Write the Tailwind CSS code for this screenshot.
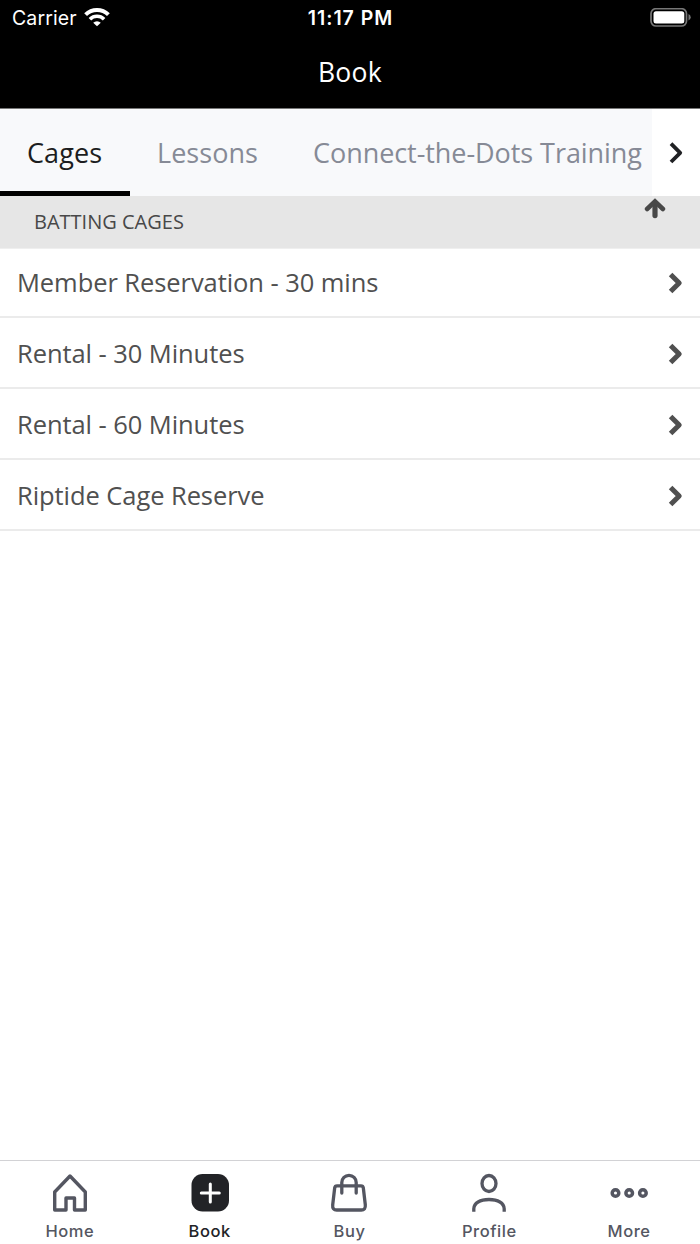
<!DOCTYPE html>
<html lang="en">
<head>
<meta charset="utf-8">
<title>Book</title>
<script src="https://cdn.jsdelivr.net/npm/@tailwindcss/browser@4"></script>
</head>
<body class="bg-white">
<div class="flex h-[1244px] w-[700px] flex-col overflow-hidden bg-white font-['Open_Sans',sans-serif]">
  <header class="h-[109px] shrink-0 border-b border-[#777] bg-black text-white">
    <div class="grid h-9 grid-cols-3 items-center pr-[9px] pl-3 font-['Inter',sans-serif] text-[19px] leading-9">
      <div class="flex items-center gap-[7px]">
        <span class="text-[19.5px] tracking-[0.1px]">Carrier</span>
        <svg class="-mt-0.5" width="26" height="20" viewBox="0 0 26 20" fill="none" stroke="#fff" stroke-width="4"><path d="M1.6 7.600a16.200 16.200 0 0 1 22.800 0"/><path d="M5.900 12.200a10.100 10.100 0 0 1 14.200 0" stroke-width="3.600"/><path d="M13 19.300l-3.800-3.600a5.400 5.400 0 0 1 7.600 0z" fill="#fff" stroke="none"/></svg>
      </div>
      <span class="pr-[2px] text-center text-[19.5px] font-semibold tracking-[0.95px] whitespace-nowrap">11:17 PM</span>
      <svg class="justify-self-end" width="42" height="20" viewBox="0 0 42 20"><rect x="2" y="0.700" width="35.500" height="17.300" rx="5" fill="none" stroke="#777" stroke-width="1.700"/><rect x="4.500" y="3.200" width="30.800" height="12.300" rx="2.500" fill="#fff"/><path d="M39.500 6q2.200 .8 2.200 3.300t-2.200 3.300z" fill="#777"/></svg>
    </div>
    <h1 class="text-center text-[26.500px] leading-[72px] font-normal tracking-[0.3px]">Book</h1>
  </header>
  <nav class="flex h-[87px] shrink-0 bg-[#f8f9fb] text-[27px] leading-[88px] whitespace-nowrap text-[#868a96]">
    <div class="w-[130px] border-b-[5px] border-black pl-[27px] text-[#1c1d20]"><span class="tracking-[0.1px]">Cages</span></div>
    <div class="w-[155px] pl-[27px]"><span class="tracking-[0.05px]">Lessons</span></div>
    <div class="w-[367px] pl-[28px]"><span class="tracking-[-0.06px]">Connect-the-Dots Training</span></div>
    <div class="flex w-12 items-center justify-center bg-white"><svg width="14" height="22" viewBox="0 0 14 22" fill="none" stroke="#202124" stroke-width="3.800"><path d="M2 1.600l9.200 9.200L2 20" stroke-linejoin="round"/></svg></div>
  </nav>
  <main class="flex-1 text-[#505050]">
    <div class="flex h-[53px] justify-between border-b border-[#efefef] bg-[#e6e6e6] pr-[34px] pl-[34px]">
      <h2 class="text-[20px] leading-[51px] font-normal text-[#484848]"><span>BATTING CAGES</span></h2>
      <svg class="mt-[2px]" width="22" height="21" viewBox="0 0 22 21" fill="none" stroke="#484848" stroke-width="5.200" stroke-linecap="round"><path d="M11 17.600V4.500"/><path d="M3.100 11L11 3.400l7.900 7.600" stroke-width="4.600"/></svg>
    </div>
    <div class="flex h-[69px] items-center justify-between border-b-2 border-[#ebebeb] pr-[17px] pl-[17px] text-[25.500px]"><span class="tracking-[-0.07px]">Member Reservation - 30 mins</span><svg width="15" height="22" viewBox="0 0 15 22" fill="none" stroke="#505050" stroke-width="5" stroke-linejoin="round"><path d="M2.600 2.400l8.600 8.600-8.600 8.600"/></svg></div>
    <div class="flex h-[71px] items-center justify-between border-b-2 border-[#ebebeb] pt-[2px] pr-[17px] pl-[17px] text-[25.500px]"><span class="tracking-[-0.07px]">Rental - 30 Minutes</span><svg width="15" height="22" viewBox="0 0 15 22" fill="none" stroke="#505050" stroke-width="5" stroke-linejoin="round"><path d="M2.600 2.400l8.600 8.600-8.600 8.600"/></svg></div>
    <div class="flex h-[71px] items-center justify-between border-b-2 border-[#ebebeb] pt-[2px] pr-[17px] pl-[17px] text-[25.500px]"><span class="tracking-[-0.07px]">Rental - 60 Minutes</span><svg width="15" height="22" viewBox="0 0 15 22" fill="none" stroke="#505050" stroke-width="5" stroke-linejoin="round"><path d="M2.600 2.400l8.600 8.600-8.600 8.600"/></svg></div>
    <div class="flex h-[71px] items-center justify-between border-b-2 border-[#ebebeb] pt-[2px] pr-[17px] pl-[17px] text-[25.500px]"><span class="tracking-[-0.07px]">Riptide Cage Reserve</span><svg width="15" height="22" viewBox="0 0 15 22" fill="none" stroke="#505050" stroke-width="5" stroke-linejoin="round"><path d="M2.600 2.400l8.600 8.600-8.600 8.600"/></svg></div>
  </main>
  <footer class="grid h-[84px] shrink-0 grid-cols-5 border-t border-[#d2d2d5] pt-3 pr-px font-['Inter',sans-serif] text-[16.500px] leading-6 font-[450] tracking-[0.550px] text-[#545661]">
    <div class="flex flex-col items-center gap-[6px]"><svg width="40" height="40" viewBox="0 0 40 40" fill="none" stroke="currentColor" stroke-width="3.400" stroke-linejoin="round"><path d="M4.700 37V19L20 3l15.300 16v18H24.500V25H16v12z"/></svg><span>Home</span></div>
    <div class="flex flex-col items-center gap-[6px] text-[#222327]"><svg width="40" height="40" viewBox="0 0 40 40"><rect x="1.500" y="1" width="37.500" height="37.500" rx="11" fill="currentColor"/><path d="M11.300 19.900h18M20.300 11v18" fill="none" stroke="#fff" stroke-width="3" stroke-linecap="round"/></svg><span>Book</span></div>
    <div class="flex flex-col items-center gap-[6px]"><svg width="40" height="40" viewBox="0 0 40 40" fill="none" stroke="currentColor" stroke-width="3.300" stroke-linejoin="round"><path d="M8 12.800h24q2 0 2.300 2l2 17q.5 5.200-4 5.200H7.700q-4.500 0-4-5.200l2-17Q6 12.800 8 12.800z"/><path d="M12.800 20V9.500a7.200 7.200 0 0 1 14.400 0V20" stroke-linecap="round"/></svg><span>Buy</span></div>
    <div class="flex flex-col items-center gap-[6px]"><svg width="40" height="40" viewBox="0 0 40 40" fill="none" stroke="currentColor" stroke-width="3.300"><ellipse cx="20" cy="10.500" rx="7" ry="8"/><path d="M4.800 38.800v-3C5 30 11 26.500 20 26.500s15 3.500 15.200 9.300v3"/></svg><span>Profile</span></div>
    <div class="flex flex-col items-center gap-[6px]"><svg width="40" height="40" viewBox="0 0 40 40" fill="none" stroke="currentColor" stroke-width="3.500"><circle cx="6.500" cy="20" r="3.300"/><circle cx="20.200" cy="20" r="3.300"/><circle cx="33.900" cy="20" r="3.300"/></svg><span>More</span></div>
  </footer>
</div>
</body>
</html>
